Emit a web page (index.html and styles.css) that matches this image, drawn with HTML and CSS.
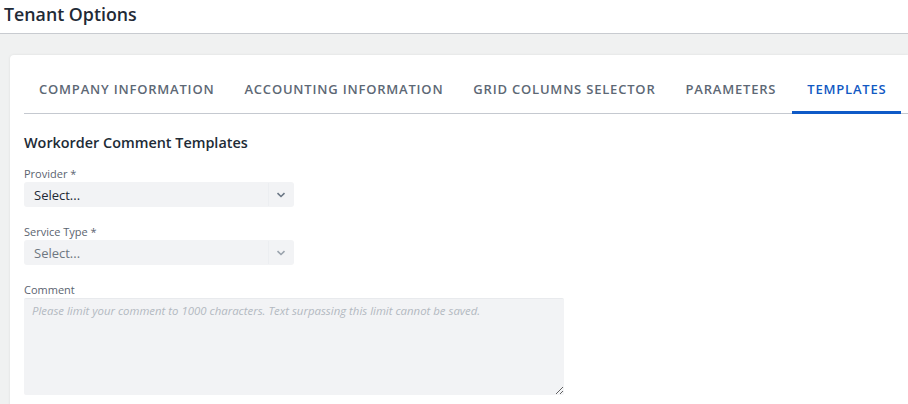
FILE: index.html
```html
<!DOCTYPE html>
<html>
<head>
<meta charset="utf-8">
<link rel="stylesheet" href="styles.css">
</head>
<body>
<header class="page-header">
  <h1 class="page-title">Tenant Options</h1>
</header>
<main class="content">
  <section class="card">
    <nav class="tabs">
      <div class="tab">COMPANY INFORMATION</div>
      <div class="tab">ACCOUNTING INFORMATION</div>
      <div class="tab">GRID COLUMNS SELECTOR</div>
      <div class="tab">PARAMETERS</div>
      <div class="tab active">TEMPLATES</div>
    </nav>
    <div class="panel">
      <h2 class="section-title">Workorder Comment Templates</h2>
      <div class="field">
        <label class="label">Provider *</label>
        <div class="select">
          <span class="select-value">Select...</span>
          <span class="select-sep"></span>
          <svg class="chev" width="10" height="6" viewBox="0 0 10 6"><path d="M1.5 1.2 L5 4.5 L8.5 1.2" fill="none" stroke="#6b7785" stroke-width="1.6"/></svg>
        </div>
      </div>
      <div class="field">
        <label class="label">Service Type *</label>
        <div class="select disabled">
          <span class="select-value">Select...</span>
          <span class="select-sep"></span>
          <svg class="chev" width="10" height="6" viewBox="0 0 10 6"><path d="M1.5 1.2 L5 4.5 L8.5 1.2" fill="none" stroke="#9aa3ad" stroke-width="1.6"/></svg>
        </div>
      </div>
      <div class="field">
        <label class="label">Comment</label>
        <textarea class="textarea" placeholder="Please limit your comment to 1000 characters. Text surpassing this limit cannot be saved."></textarea>
      </div>
    </div>
  </section>
</main>
</body>
</html>
```
FILE: styles.css
```css
* { box-sizing: border-box; }
html, body { margin: 0; padding: 0; }
body {
  font-family: "Open Sans", "Liberation Sans", sans-serif;
  background: #f0f1f1;
  color: #212b36;
  width: 908px;
  height: 404px;
  overflow: hidden;
}
.page-header {
  background: #ffffff;
  height: 34px;
  border-bottom: 1px solid #c8cbd0;
  padding: 2px 0 0 4px;
}
.page-title {
  margin: 0;
  font-size: 17.8px;
  font-weight: 600;
  line-height: 24px;
  color: #1f2a36;
}
.content {
  padding: 21px 0 0 10px;
  height: 370px;
  overflow: hidden;
}
.card {
  background: #ffffff;
  border-radius: 4px 0 0 0;
  box-shadow: 0 0 3px rgba(0,0,0,0.08);
  padding: 12px 0 0 14px;
  height: 360px;
}
.tabs {
  display: flex;
  border-bottom: 1px solid #c5c9d0;
  height: 47px;
}
.tab {
  padding: 0 15px;
  height: 47px;
  line-height: 45px;
  font-size: 13px;
  font-weight: 600;
  letter-spacing: 0.8px;
  color: #5d6875;
  white-space: nowrap;
  border-bottom: 3px solid transparent;
}
.tab.active {
  color: #1259c3;
  border-bottom-color: #0f5ac7;
  margin-left: 1px;
}
.panel {
  padding-top: 18px;
}
.section-title {
  margin: 0 0 11px 0;
  font-size: 14.4px;
  font-weight: 600;
  line-height: 22px;
  color: #212b36;
}
.field {
  margin-bottom: 16px;
}
.label {
  display: block;
  font-size: 11px;
  line-height: 17px;
  color: #5b6470;
}
.select {
  width: 270px;
  height: 25px;
  background: #f2f3f5;
  border-radius: 3px;
  display: flex;
  align-items: center;
  padding-left: 10px;
}
.select-value {
  flex: 1;
  font-size: 13px;
  color: #1f2a36;
}
.select.disabled .select-value { color: #6e7781; }
.select-sep {
  width: 1px;
  height: 23px;
  background: #eceef1;
}
.chev {
  margin: 0 8px 0 7px;
}
.textarea {
  display: block;
  width: 540px;
  height: 97px;
  background: #f2f3f5;
  border: none;
  border-top: 1px solid #e8eaed;
  border-radius: 2px;
  padding: 4px 8px;
  font-family: "Open Sans", "Liberation Sans", sans-serif;
  font-size: 11.4px;
  resize: vertical;
  outline: none;
}
.textarea::placeholder {
  font-style: italic;
  color: #b3b9c1;
}
```
